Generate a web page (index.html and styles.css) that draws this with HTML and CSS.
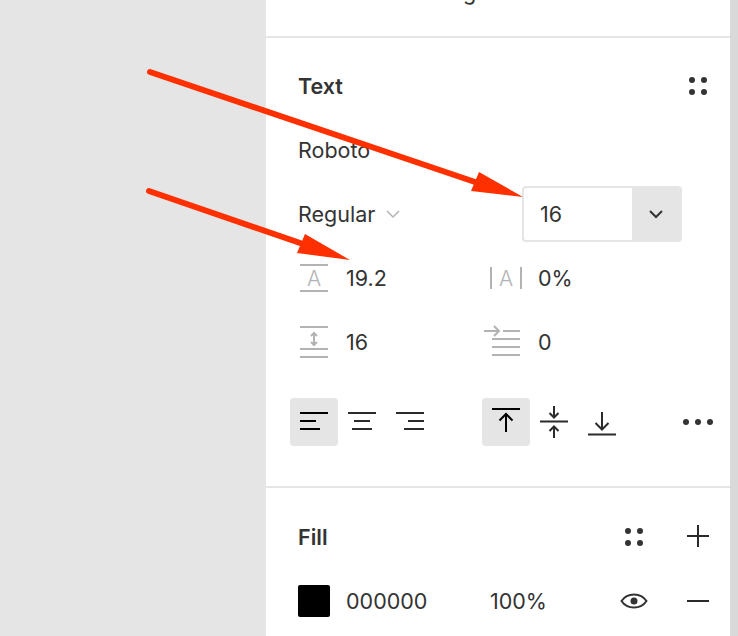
FILE: index.html
```html
<!DOCTYPE html>
<html lang="en">
<head>
<meta charset="utf-8">
<title>Text properties</title>
<link rel="stylesheet" href="styles.css">
</head>
<body>
<div class="canvas"></div>
<main class="panel">
  <section class="top"><span class="clipped">g</span></section>
  <section class="section text-section">
    <div class="row">
      <h2 class="title">Text</h2>
      <button class="icon-btn push" aria-label="Styles"><svg width="48" height="48" viewBox="0 0 48 48"><circle cx="18" cy="18" r="3"/><circle cx="30" cy="18" r="3"/><circle cx="18" cy="30" r="3"/><circle cx="30" cy="30" r="3"/></svg></button>
    </div>
    <div class="row"><span>Roboto</span></div>
    <div class="row">
      <span>Regular</span>
      <svg class="chev-light" width="14" height="9" viewBox="0 0 14 9"><path d="M1 1l6 6 6-6"/></svg>
      <div class="size-box">
        <span class="size-value">16</span>
        <span class="size-arrow"><svg class="chev-dark" width="14" height="9" viewBox="0 0 14 9"><path d="M1 1l6 6 6-6"/></svg></span>
      </div>
    </div>
    <div class="row metrics">
      <div class="metric">
        <span class="metric-icon"><svg class="ico-grey" width="48" height="32" viewBox="0 0 48 32"><path d="M2 3h28M2 29h28"/><text x="16" y="24" text-anchor="middle">A</text></svg></span>
        <span>19.2</span>
      </div>
      <div class="metric">
        <span class="metric-icon"><svg class="ico-grey" width="48" height="32" viewBox="0 0 48 32"><path d="M1 5v22M31 5v22"/><text x="16" y="24" text-anchor="middle">A</text></svg></span>
        <span>0%</span>
      </div>
    </div>
    <div class="row metrics">
      <div class="metric">
        <span class="metric-icon"><svg class="ico-grey" width="48" height="32" viewBox="0 0 48 32"><path d="M2 1h28M2 23h28M2 31h28M16 7v12M13 10l3-3 3 3M13 16l3 3 3-3"/></svg></span>
        <span>16</span>
      </div>
      <div class="metric">
        <span class="metric-icon"><svg class="ico-grey ico-indent" width="48" height="32" viewBox="0 0 48 32"><path d="M-6 5h15M4 0l5 5-5 5M13 5h17M2 13h28M2 21h28M2 29h28"/></svg></span>
        <span>0</span>
      </div>
    </div>
    <div class="row align-row">
      <div class="group">
        <button class="icon-btn active" aria-label="Align left"><svg class="ico-line" width="48" height="48" viewBox="0 0 48 48"><path d="M10 15h28M10 23h16M10 31h20"/></svg></button>
        <button class="icon-btn" aria-label="Align centre"><svg class="ico-line" width="48" height="48" viewBox="0 0 48 48"><path d="M10 15h28M16 23h16M14 31h20"/></svg></button>
        <button class="icon-btn" aria-label="Align right"><svg class="ico-line" width="48" height="48" viewBox="0 0 48 48"><path d="M10 15h28M22 23h16M18 31h20"/></svg></button>
      </div>
      <div class="group">
        <button class="icon-btn active" aria-label="Align top"><svg class="ico-line" width="48" height="48" viewBox="0 0 48 48"><path d="M10 11h28M24 34V16M17.500 22.500L24 16l6.500 6.500"/></svg></button>
        <button class="icon-btn" aria-label="Align middle"><svg class="ico-line" width="48" height="48" viewBox="0 0 48 48"><path d="M10 23.500h28M24 8v11M19.500 15l4.500 4.500 4.500-4.500M24 40V29M19.500 33l4.500-4.500 4.500 4.500"/></svg></button>
        <button class="icon-btn" aria-label="Align bottom"><svg class="ico-line" width="48" height="48" viewBox="0 0 48 48"><path d="M10 36.500h28M24 14v17M17.500 25l6.500 6.500 6.500-6.500"/></svg></button>
      </div>
      <button class="icon-btn" aria-label="More"><svg width="48" height="48" viewBox="0 0 48 48"><circle cx="12" cy="24" r="3"/><circle cx="24" cy="24" r="3"/><circle cx="36" cy="24" r="3"/></svg></button>
    </div>
  </section>
  <section class="section fill-section">
    <div class="row">
      <h2 class="title">Fill</h2>
      <div class="actions push">
        <button class="icon-btn" aria-label="Styles"><svg width="48" height="48" viewBox="0 0 48 48"><circle cx="18" cy="18" r="3"/><circle cx="30" cy="18" r="3"/><circle cx="18" cy="30" r="3"/><circle cx="30" cy="30" r="3"/></svg></button>
        <button class="icon-btn" aria-label="Add"><svg class="ico-line" width="48" height="48" viewBox="0 0 48 48"><path d="M13 23h22M24 12v22"/></svg></button>
      </div>
    </div>
    <div class="row">
      <span class="swatch"></span>
      <span class="hex">000000</span>
      <span>100%</span>
      <div class="actions push">
        <button class="icon-btn" aria-label="Visible"><svg class="ico-eye" width="48" height="48" viewBox="0 0 48 48"><path d="M11.500 24c3-4.500 7.500-6.500 12.500-6.500s9.500 2 12.500 6.500c-3 4.500-7.500 6.500-12.500 6.500s-9.500-2-12.500-6.500z"/><circle class="pupil" cx="24" cy="24" r="3.500"/></svg></button>
        <button class="icon-btn" aria-label="Remove"><svg class="ico-line" width="48" height="48" viewBox="0 0 48 48"><path d="M13 24h22"/></svg></button>
      </div>
    </div>
  </section>
</main>
<div class="scrollbar"></div>
<svg class="annotations" width="738" height="636" viewBox="0 0 738 636">
  <path class="shaft" d="M150 72L478 183"/>
  <path class="head" d="M479 172L523 197L471 191Z"/>
  <path class="shaft" d="M149 191L303 244"/>
  <path class="head" d="M305 234L350 260L297 253Z"/>
</svg>
</body>
</html>
```

FILE: styles.css
```css
* { box-sizing: border-box; }
html, body { margin: 0; height: 100%; }
body {
  display: flex;
  height: 636px;
  overflow: hidden;
  position: relative;
  font-family: Inter, "Liberation Sans", sans-serif;
  font-size: 21.5px;
  color: #333;
  background: #fff;
}
.canvas { width: 266px; flex: none; background: #e5e5e5; }
.scrollbar { width: 8px; flex: none; background: #d9d9d9; }
.panel { flex: 1; min-width: 0; background: #fff; }

.top {
  height: 38px;
  border-bottom: 2px solid #e5e5e5;
  overflow: hidden;
  padding-left: 197px;
}
.clipped { display: block; line-height: 24px; margin-top: -20px; }

.section { padding: 0 8px 0 32px; }
.text-section { padding-top: 16px; padding-bottom: 40px; height: 450px; border-bottom: 2px solid #e5e5e5; }
.fill-section { padding-top: 17px; }

.row { display: flex; align-items: center; height: 64px; }
.title { margin: 0; font-size: 21.5px; font-weight: 600; }
.push { margin-left: auto; }
.actions { display: flex; gap: 16px; }

.icon-btn {
  display: block;
  width: 48px;
  height: 48px;
  padding: 0;
  border: 0;
  border-radius: 4px;
  background: none;
  color: inherit;
}
.icon-btn svg, .metric-icon svg { display: block; overflow: visible; }
.icon-btn circle { fill: #333; }
.active { background: #e5e5e5; }

.chev-light, .chev-dark { fill: none; stroke-width: 1.5; }
.chev-light { margin-left: 11px; stroke: #b3b3b3; }
.chev-dark { stroke: #333; stroke-width: 2; }

.size-box {
  display: flex;
  width: 160px;
  height: 56px;
  margin-left: auto;
  margin-right: 40px;
  border: 2px solid #e5e5e5;
  border-radius: 4px;
  overflow: hidden;
}
.size-value { flex: 1; line-height: 52px; padding-left: 16px; }
.size-arrow { width: 48px; display: flex; align-items: center; justify-content: center; background: #e5e5e5; }

.metric { display: flex; align-items: center; width: 192px; }
.metric-icon { width: 48px; flex: none; }
.ico-grey { fill: none; stroke: #b3b3b3; stroke-width: 2; }
.ico-grey text {
  fill: #b3b3b3;
  stroke: none;
  font-family: Inter, "Liberation Sans", sans-serif;
  font-size: 21px;
  font-weight: 300;
}

.align-row { height: 48px; margin-top: 24px; margin-left: -8px; gap: 48px; }
.group { display: flex; }
.ico-line { fill: none; stroke: #2b2b2b; stroke-width: 2; }
.active .ico-line { stroke: #000; }

.swatch { width: 32px; height: 32px; margin-right: 16px; border-radius: 2px; background: #000; }
.hex { width: 144px; }
.ico-eye { fill: none; stroke: #333; stroke-width: 2; }
.icon-btn .pupil { fill: #333; stroke: none; }

.annotations { position: absolute; left: 0; top: 0; pointer-events: none; }
.shaft { fill: none; stroke: #ff3000; stroke-width: 6; stroke-linecap: round; }
.head { fill: #ff3000; }
```
